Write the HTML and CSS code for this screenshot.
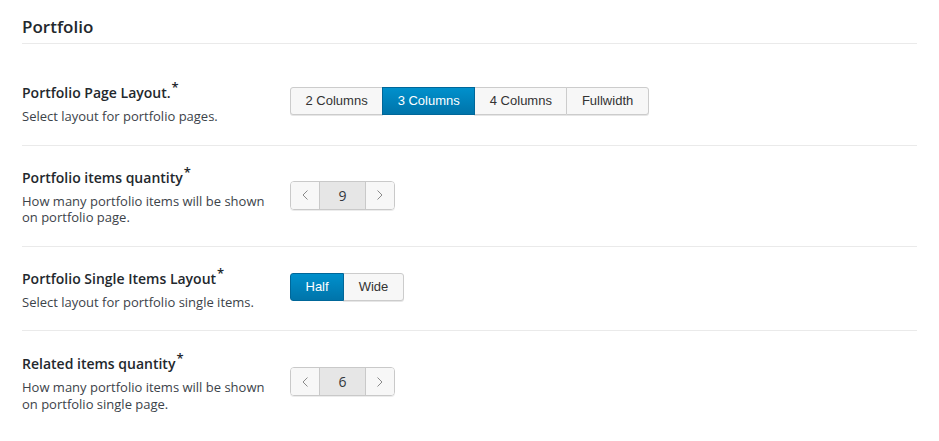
FILE: index.html
```html
<!DOCTYPE html>
<html>
<head>
<meta charset="utf-8">
<link rel="stylesheet" href="styles.css">
</head>
<body>
<div class="page">
  <h2 class="section-title">Portfolio</h2>
  <div class="rows">
    <div class="row">
      <div class="info">
        <div class="label">Portfolio Page Layout.<sup class="req">*</sup></div>
        <div class="desc">Select layout for portfolio pages.</div>
      </div>
      <div class="control">
        <div class="btn-group">
          <span class="btn">2 Columns</span>
          <span class="btn active">3 Columns</span>
          <span class="btn">4 Columns</span>
          <span class="btn">Fullwidth</span>
        </div>
      </div>
    </div>
    <div class="row">
      <div class="info">
        <div class="label">Portfolio items quantity<sup class="req">*</sup></div>
        <div class="desc">How many portfolio items will be shown on portfolio page.</div>
      </div>
      <div class="control">
        <div class="spinner">
          <span class="spin-btn"><svg width="6" height="10" viewBox="0 0 6 10"><path d="M5.5 0.5 L1 5 L5.5 9.5" fill="none" stroke="#8a8a8a" stroke-width="1"/></svg></span>
          <span class="spin-val">9</span>
          <span class="spin-btn"><svg width="6" height="10" viewBox="0 0 6 10"><path d="M0.5 0.5 L5 5 L0.5 9.5" fill="none" stroke="#8a8a8a" stroke-width="1"/></svg></span>
        </div>
      </div>
    </div>
    <div class="row">
      <div class="info">
        <div class="label">Portfolio Single Items Layout<sup class="req">*</sup></div>
        <div class="desc">Select layout for portfolio single items.</div>
      </div>
      <div class="control">
        <div class="btn-group">
          <span class="btn active">Half</span>
          <span class="btn">Wide</span>
        </div>
      </div>
    </div>
    <div class="row last">
      <div class="info">
        <div class="label">Related items quantity<sup class="req">*</sup></div>
        <div class="desc">How many portfolio items will be shown on portfolio single page.</div>
      </div>
      <div class="control">
        <div class="spinner">
          <span class="spin-btn"><svg width="6" height="10" viewBox="0 0 6 10"><path d="M5.5 0.5 L1 5 L5.5 9.5" fill="none" stroke="#8a8a8a" stroke-width="1"/></svg></span>
          <span class="spin-val">6</span>
          <span class="spin-btn"><svg width="6" height="10" viewBox="0 0 6 10"><path d="M0.5 0.5 L5 5 L0.5 9.5" fill="none" stroke="#8a8a8a" stroke-width="1"/></svg></span>
        </div>
      </div>
    </div>
  </div>
</div>
</body>
</html>
```

FILE: styles.css
```css
* { box-sizing: border-box; }
html, body { margin: 0; padding: 0; background: #fff; }
body {
  font-family: "Open Sans", "Liberation Sans", sans-serif;
  color: #23282d;
}
.page {
  width: 895px;
  margin-left: 22px;
  padding-top: 16px;
}
.section-title {
  margin: 0;
  font-size: 17px;
  line-height: 22px;
  font-weight: 600;
  color: #23282d;
  padding-bottom: 5px;
  border-bottom: 1px solid #eaeaea;
}
.rows { margin-top: 17px; }
.row {
  display: flex;
  align-items: flex-start;
  padding: 22px 0 20px;
  border-bottom: 1px solid #eaeaea;
}
.row.last { border-bottom: none; padding-top: 23px; }
.info { width: 268px; flex: none; }
.label {
  font-size: 14px;
  line-height: 20px;
  font-weight: 600;
  color: #23282d;
}
.req {
  font-size: 13px;
  line-height: 0;
  vertical-align: 6px;
  margin-left: 1px;
}
.desc {
  margin-top: 5px;
  font-size: 13px;
  line-height: 16.5px;
  color: #3c434a;
  width: 250px;
}
.control { padding-top: 4px; }
.btn-group { display: flex; }
.btn {
  font-family: "Liberation Sans", Arial, sans-serif;
  font-size: 13px;
  height: 28px;
  line-height: 26px;
  padding: 0 14.5px;
  background: #f7f7f7;
  border: 1px solid #cccccc;
  color: #333;
  margin-left: -1px;
  box-shadow: 0 1px 0 #e6e6e6;
}
.btn:first-child { margin-left: 0; border-radius: 3px 0 0 3px; }
.btn:last-child { border-radius: 0 3px 3px 0; padding-right: 15px; }
.btn.active {
  background: linear-gradient(#0090cc, #0074aa);
  border-color: #006799;
  color: #fff;
  position: relative;
  z-index: 1;
  box-shadow: none;
}
.spinner {
  display: flex;
  margin-top: 9px;
  height: 29px;
  border: 1px solid #c9c9c9;
  border-radius: 4px;
  overflow: hidden;
  width: 105px;
  box-shadow: 0 1px 0 #ececec;
}
.spin-btn {
  width: 28px;
  flex: none;
  display: flex;
  align-items: center;
  justify-content: center;
  background: #f7f7f7;
}
.spin-val {
  width: 47px;
  flex: none;
  display: flex;
  align-items: center;
  justify-content: center;
  background: #e6e6e6;
  border-left: 1px solid #c9c9c9;
  border-right: 1px solid #c9c9c9;
  font-size: 14px;
  color: #32373c;
}
```
